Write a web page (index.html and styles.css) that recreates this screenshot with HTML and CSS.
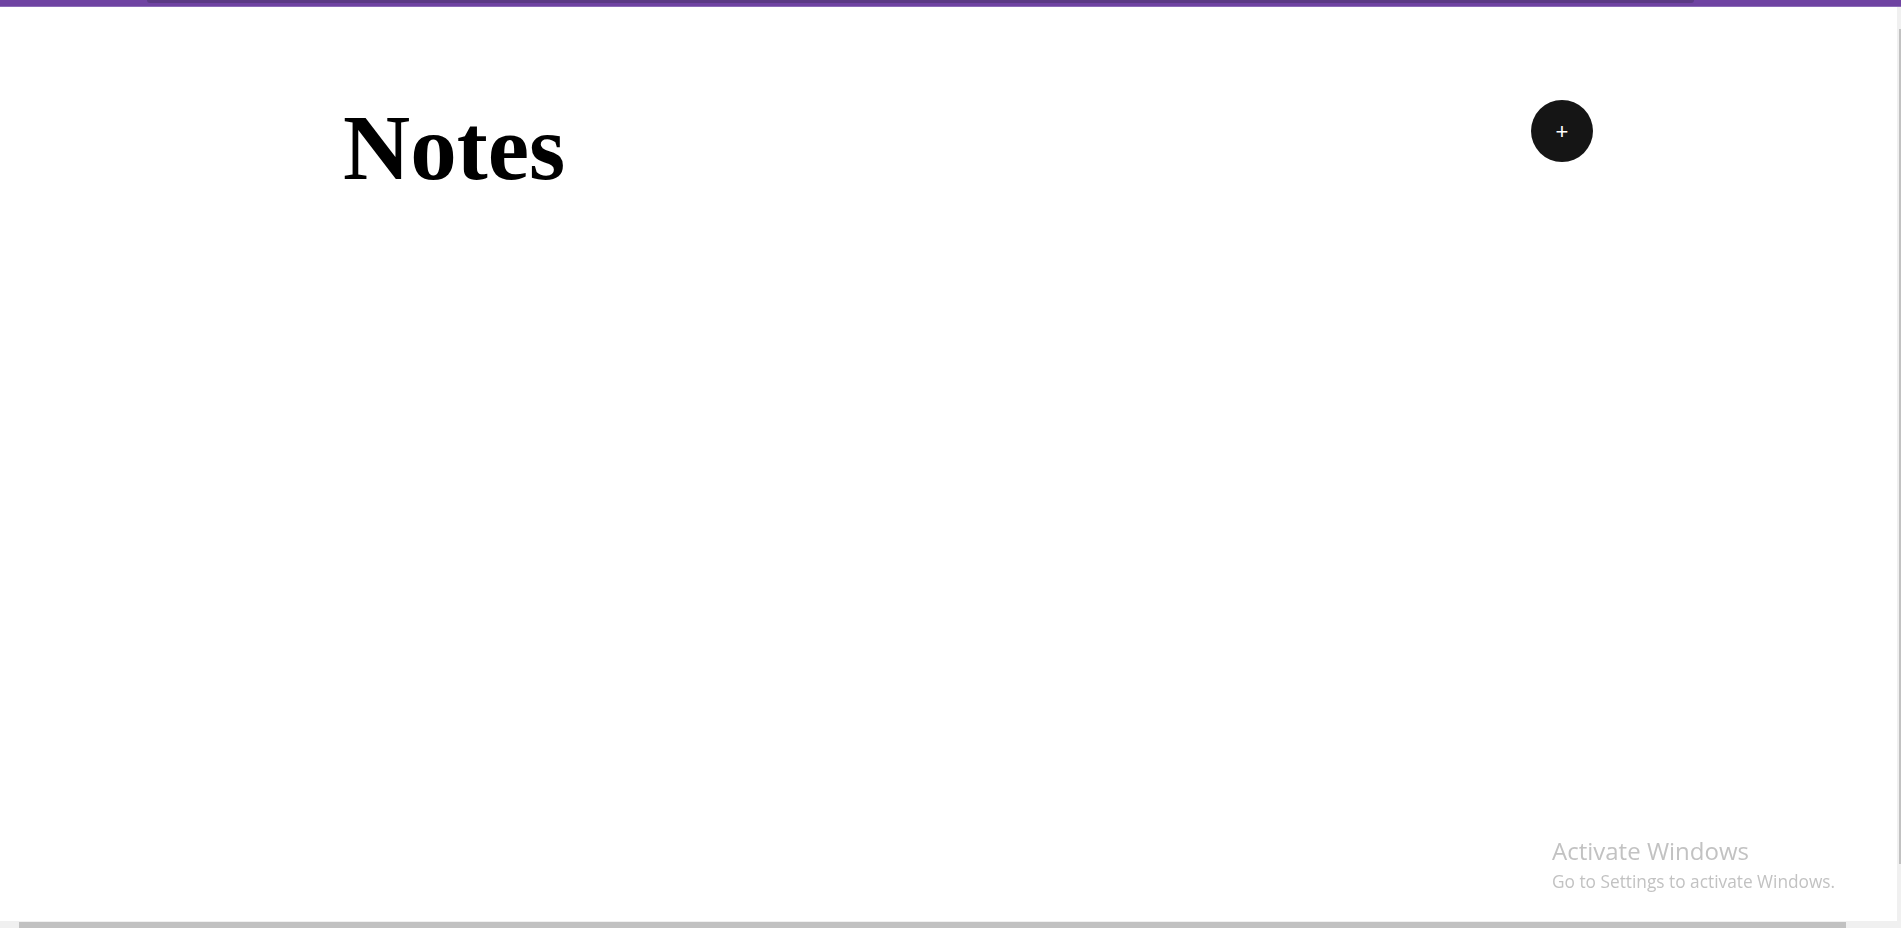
FILE: index.html
```html
<!DOCTYPE html>
<html lang="en">
<head>
<meta charset="utf-8">
<title>Notes</title>
<link rel="stylesheet" href="styles.css">
</head>
<body>
<div class="topbar"><div class="topbar-tab"></div></div>
<main class="page">
  <header class="notes-header">
    <h1 class="title">Notes</h1>
    <button class="add-btn" type="button" aria-label="Add note">+</button>
  </header>
</main>
<div class="watermark">
  <div class="wm-title">Activate Windows</div>
  <div class="wm-sub">Go to Settings to activate Windows.</div>
</div>
<div class="vscroll"><div class="vthumb"></div></div>
<div class="hscroll"><div class="hthumb"></div></div>
</body>
</html>
```
FILE: styles.css
```css
html, body {
  margin: 0;
  padding: 0;
  background: #ffffff;
  height: 100%;
  overflow: hidden;
}
body {
  font-family: "Liberation Serif", "Times New Roman", serif;
}
.topbar {
  height: 6px;
  background: #6f43a2;
  border-bottom: 1px solid #8c6cb8;
  display: flex;
  justify-content: center;
}
.topbar-tab {
  width: 1547px;
  height: 3px;
  margin-left: -61px;
  background: #5b3a84;
  border-radius: 0 0 6px 6px;
}
.page {
  padding: 0 308px 0 343px;
}
.notes-header {
  display: flex;
  justify-content: space-between;
  align-items: flex-start;
}
.title {
  margin: 94px 0 0 0;
  font-size: 93px;
  line-height: 1;
  font-weight: bold;
  color: #000;
}
.add-btn {
  margin-top: 93px;
  width: 62px;
  height: 62px;
  border-radius: 50%;
  border: none;
  background: #151515;
  color: #ffffff;
  font-family: "Liberation Sans", Arial, sans-serif;
  font-size: 22px;
  line-height: 1;
  padding: 2px 0 0 0;
  display: flex;
  align-items: center;
  justify-content: center;
}
.watermark {
  position: fixed;
  left: 1552px;
  top: 835px;
  color: #c2c2c2;
  font-family: "Open Sans", "Noto Sans", sans-serif;
}
.wm-title {
  font-size: 24px;
  line-height: 32px;
}
.wm-sub {
  font-size: 17.3px;
  line-height: 22px;
  margin-top: 4px;
}
.vscroll {
  position: fixed;
  top: 7px;
  right: 0;
  width: 4px;
  height: 914px;
  background: #f0f0f0;
}
.vthumb {
  margin: 22px 0 0 2px;
  width: 2px;
  height: 835px;
  background: #c1c1c1;
}
.hscroll {
  position: fixed;
  left: 0;
  bottom: 0;
  width: 1901px;
  height: 7px;
  background: #f0f0f0;
}
.hthumb {
  margin: 1px 0 0 19px;
  width: 1827px;
  height: 6px;
  background: #c1c1c1;
}
```
